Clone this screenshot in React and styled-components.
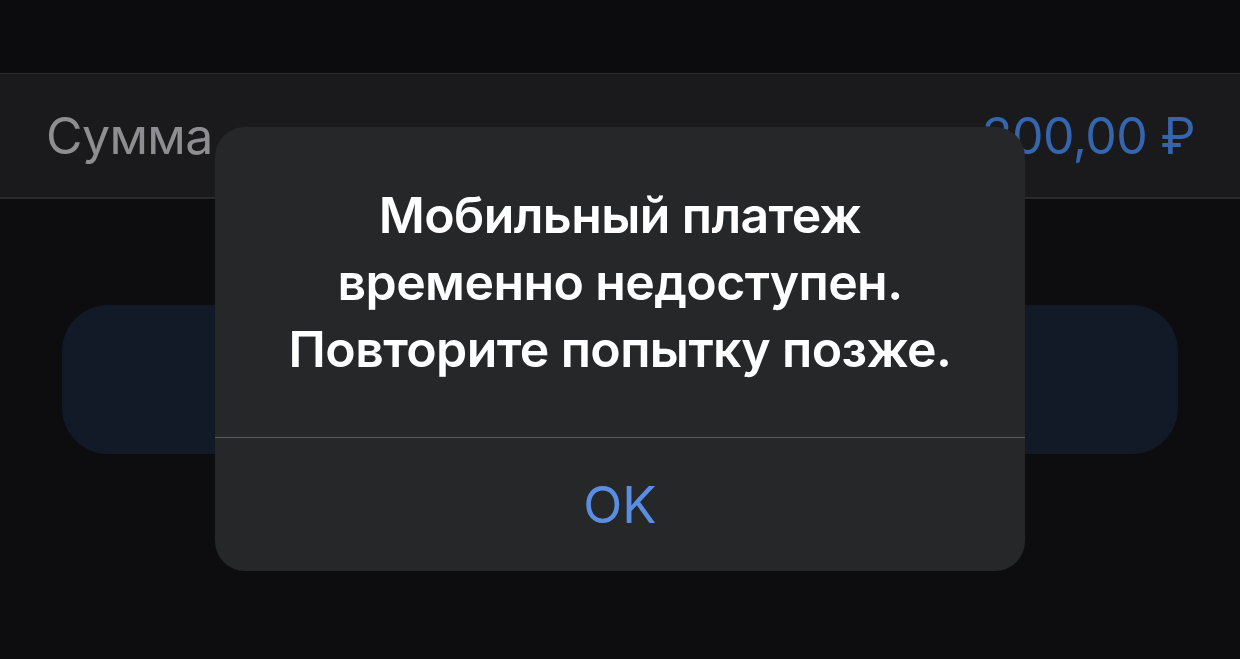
import React from 'react';
import styled, { createGlobalStyle } from 'styled-components';

const GlobalStyle = createGlobalStyle`
  html, body {
    margin: 0;
    padding: 0;
    background: #0d0d0f;
    font-family: Inter, "Noto Sans", sans-serif;
    -webkit-font-smoothing: antialiased;
  }
`;

const Screen = styled.div`
  width: 1240px;
  height: 659px;
  background: #0d0d0f;
  overflow: hidden;
  position: relative;
`;

const TopBar = styled.div`
  height: 73px;
  background: #0c0c0e;
  border-bottom: 1px solid #2b2b2e;
`;

const AmountRow = styled.div`
  height: 123px;
  background: #1a1a1c;
  border-bottom: 2px solid #2b2b2e;
  display: flex;
  align-items: center;
  justify-content: space-between;
  padding: 0 45px 0 46px;
  font-size: 50px;
  letter-spacing: -0.6px;
`;

const Label = styled.span`
  color: #8e8e92;
`;

const Amount = styled.span`
  color: #3465ad;
`;

const PayButton = styled.div`
  margin: 106px 62px 0;
  height: 149px;
  border-radius: 46px;
  background: #111a26;
`;

const Alert = styled.div`
  position: absolute;
  top: 127px;
  left: 215px;
  width: 810px;
  height: 444px;
  border-radius: 30px;
  background: #262729;
  display: flex;
  flex-direction: column;
  overflow: hidden;
`;

const Message = styled.div`
  height: 311px;
  box-sizing: border-box;
  padding-top: 55px;
  border-bottom: 1px solid #5a5a5e;
  color: #ffffff;
  font-size: 50px;
  font-weight: 600;
  letter-spacing: -0.6px;
  line-height: 67px;
  text-align: center;
`;

const Action = styled.button`
  flex: 1;
  border: none;
  background: transparent;
  color: #5a8ee2;
  font-family: inherit;
  font-size: 51px;
  font-weight: 400;
  display: flex;
  align-items: center;
  justify-content: center;
  padding: 0;
  cursor: pointer;
`;

export default function App() {
  return (
    <Screen>
      <GlobalStyle />
      <TopBar />
      <AmountRow>
        <Label>Сумма</Label>
        <Amount>300,00 ₽</Amount>
      </AmountRow>
      <PayButton />
      <Alert>
        <Message>
          Мобильный платеж
          <br />
          временно недоступен.
          <br />
          Повторите попытку позже.
        </Message>
        <Action>OK</Action>
      </Alert>
    </Screen>
  );
}
